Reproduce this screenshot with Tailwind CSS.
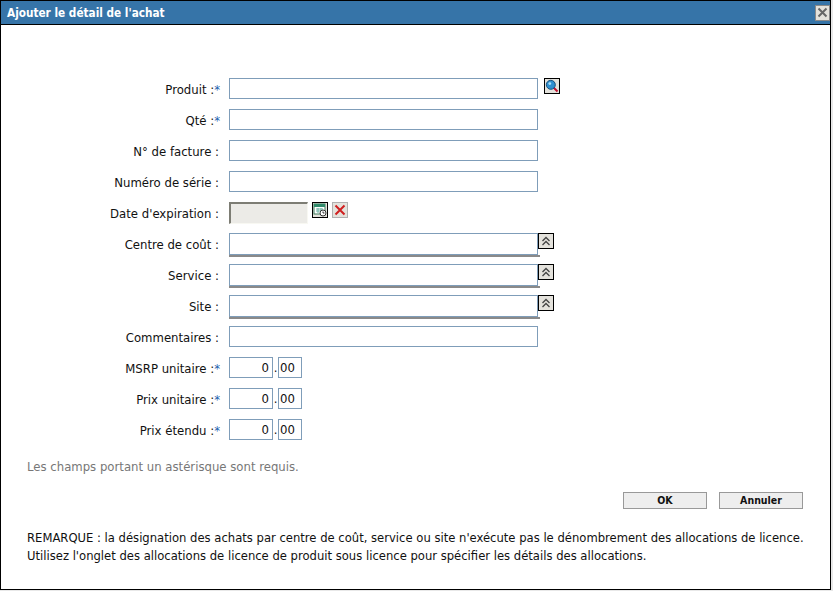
<!DOCTYPE html>
<html lang="fr">
<head>
    <meta charset="UTF-8">
    <title>Ajouter le détail de l'achat</title>
    <script src="https://cdn.jsdelivr.net/npm/@tailwindcss/browser@4"></script>
</head>
<body class="bg-[#e8e8e8] w-[833px] h-[591px] overflow-hidden font-['DejaVu_Sans_Condensed','DejaVu_Sans',sans-serif] text-[13px] text-[#111]">
    <div class="w-[831px] h-[590px] bg-white border border-black flex flex-col">
        <div class="h-[23px] bg-[#3674a8] flex items-center justify-between pl-[6px] shrink-0">
            <h1 class="text-[11.7px] font-bold text-white pt-[2px]">Ajouter le détail de l'achat</h1>
            <button class="w-[15px] h-[16px] bg-[#e4e2dc] border border-[#8a8a8a] flex items-center justify-center">
                <svg width="11" height="11" viewBox="0 0 11 11"><path d="M1.5 1.5l8 8M9.5 1.5l-8 8" stroke="#666" stroke-width="2"/></svg>
            </button>
        </div>
        <div class="h-[1px] bg-black shrink-0"></div>

        <form class="mt-[53px] flex flex-col gap-[10px]">
            <div class="flex items-center h-[21px]">
                <label class="w-[220px] text-right pr-[1px] pt-[3px]">Produit :<span class="text-[#1f5fb0]">*</span></label>
                <input class="ml-[8px] w-[309px] h-[21px] border border-[#7f9db9]">
                <button type="button" class="ml-[6px] mb-[5px] w-[16px] h-[16px] border border-black bg-[#e4e2dc] flex items-center justify-center">
                    <svg width="14" height="14" viewBox="0 0 14 14"><path d="M8.5 8.5L12.5 12.5" stroke="#c01030" stroke-width="2"/><circle cx="5.8" cy="5.8" r="4.5" fill="#2f8fd0" stroke="#17507c"/><circle cx="4.8" cy="4.6" r="1.4" fill="#a8e0f8"/></svg>
                </button>
            </div>
            <div class="flex items-center h-[21px]">
                <label class="w-[220px] text-right pr-[1px] pt-[3px]">Qté :<span class="text-[#1f5fb0]">*</span></label>
                <input class="ml-[8px] w-[309px] h-[21px] border border-[#7f9db9]">
            </div>
            <div class="flex items-center h-[21px]">
                <label class="w-[220px] text-right pr-[2px] pt-[3px]">N° de facture :</label>
                <input class="ml-[8px] w-[309px] h-[21px] border border-[#7f9db9]">
            </div>
            <div class="flex items-center h-[21px]">
                <label class="w-[220px] text-right pr-[2px] pt-[3px]">Numéro de série :</label>
                <input class="ml-[8px] w-[309px] h-[21px] border border-[#7f9db9]">
            </div>
            <div class="flex items-center h-[21px]">
                <label class="w-[220px] text-right pr-[2px] pt-[3px]">Date d'expiration :</label>
                <div class="ml-[8px] self-start w-[79px] h-[22px] bg-[#ecebe7] border-t-2 border-l-2 border-[#7d7d74] border-b border-r border-b-[#f8f8f2] border-r-[#f8f8f2]"></div>
                <button type="button" class="ml-[4px] mb-[5px] w-[16px] h-[16px] border border-black bg-[#e4e2dc] flex items-center justify-center">
                    <svg width="14" height="14" viewBox="0 0 14 14"><rect x="1" y="1" width="11" height="10" fill="#fff" stroke="#3c7a5a"/><rect x="1" y="1" width="11" height="3" fill="#2e8a6a"/><path d="M3 6h7M3 8h7M5 5v5M8 5v5" stroke="#6ab0a0"/><circle cx="10" cy="10" r="3" fill="#fff" stroke="#333"/><path d="M10 8.5V10h1.5" stroke="#333" fill="none"/></svg>
                </button>
                <button type="button" class="ml-[4px] mb-[5px] w-[16px] h-[16px] border border-[#b0b0b0] bg-[#e4e2dc] flex items-center justify-center">
                    <svg width="14" height="14" viewBox="0 0 14 14"><path d="M2.5 2.5l9 9M11.5 2.5l-9 9" stroke="#d02020" stroke-width="2"/></svg>
                </button>
            </div>
            <div class="flex items-start h-[21px]">
                <label class="w-[220px] text-right pr-[2px] pt-[3px] self-center">Centre de coût :</label>
                <div class="ml-[8px] w-[311px] h-[24px] border-b-2 border-[#8a8a8a]">
                    <input class="block w-[309px] h-[22px] border border-[#7f9db9]">
                </div>
                <button type="button" class="ml-[-2px] w-[16px] h-[16px] border border-black bg-[#e4e2dc] flex items-center justify-center">
                    <svg width="12" height="12" viewBox="0 0 12 12"><path d="M2.5 6l3.5-3.5 3.5 3.5M2.5 10l3.5-3.5 3.5 3.5" fill="none" stroke="#444" stroke-width="1.3"/></svg>
                </button>
            </div>
            <div class="flex items-start h-[21px]">
                <label class="w-[220px] text-right pr-[2px] pt-[3px] self-center">Service :</label>
                <div class="ml-[8px] w-[311px] h-[24px] border-b-2 border-[#8a8a8a]">
                    <input class="block w-[309px] h-[22px] border border-[#7f9db9]">
                </div>
                <button type="button" class="ml-[-2px] w-[16px] h-[16px] border border-black bg-[#e4e2dc] flex items-center justify-center">
                    <svg width="12" height="12" viewBox="0 0 12 12"><path d="M2.5 6l3.5-3.5 3.5 3.5M2.5 10l3.5-3.5 3.5 3.5" fill="none" stroke="#444" stroke-width="1.3"/></svg>
                </button>
            </div>
            <div class="flex items-start h-[21px]">
                <label class="w-[220px] text-right pr-[2px] pt-[3px] self-center">Site :</label>
                <div class="ml-[8px] w-[311px] h-[24px] border-b-2 border-[#8a8a8a]">
                    <input class="block w-[309px] h-[22px] border border-[#7f9db9]">
                </div>
                <button type="button" class="ml-[-2px] w-[16px] h-[16px] border border-black bg-[#e4e2dc] flex items-center justify-center">
                    <svg width="12" height="12" viewBox="0 0 12 12"><path d="M2.5 6l3.5-3.5 3.5 3.5M2.5 10l3.5-3.5 3.5 3.5" fill="none" stroke="#444" stroke-width="1.3"/></svg>
                </button>
            </div>
            <div class="flex items-center h-[21px]">
                <label class="w-[220px] text-right pr-[2px] pt-[3px]">Commentaires :</label>
                <input class="ml-[8px] w-[309px] h-[21px] border border-[#7f9db9]">
            </div>
            <div class="flex items-center h-[21px]">
                <label class="w-[220px] text-right pr-[1px] pt-[3px]">MSRP unitaire :<span class="text-[#1f5fb0]">*</span></label>
                <input value="0" class="ml-[8px] w-[44px] h-[21px] border border-[#7f9db9] text-right pr-[3px]">
                <span class="w-[5px] text-center">.</span>
                <input value="00" class="w-[24px] h-[21px] border border-[#7f9db9] pl-[1px]">
            </div>
            <div class="flex items-center h-[21px]">
                <label class="w-[220px] text-right pr-[1px] pt-[3px]">Prix unitaire :<span class="text-[#1f5fb0]">*</span></label>
                <input value="0" class="ml-[8px] w-[44px] h-[21px] border border-[#7f9db9] text-right pr-[3px]">
                <span class="w-[5px] text-center">.</span>
                <input value="00" class="w-[24px] h-[21px] border border-[#7f9db9] pl-[1px]">
            </div>
            <div class="flex items-center h-[21px]">
                <label class="w-[220px] text-right pr-[1px] pt-[3px]">Prix étendu :<span class="text-[#1f5fb0]">*</span></label>
                <input value="0" class="ml-[8px] w-[44px] h-[21px] border border-[#7f9db9] text-right pr-[3px]">
                <span class="w-[5px] text-center">.</span>
                <input value="00" class="w-[24px] h-[21px] border border-[#7f9db9] pl-[1px]">
            </div>
        </form>

        <p class="mt-[17px] ml-[26px] text-[#777]">Les champs portant un astérisque sont requis.</p>

        <div class="mt-[15px] flex justify-end gap-[12px] pr-[27px]">
            <button class="w-[84px] h-[17px] bg-[#eeeeee] border border-[#999] font-bold text-[10.5px] leading-none">OK</button>
            <button class="w-[84px] h-[17px] bg-[#eeeeee] border border-[#999] font-bold text-[10.5px] leading-none">Annuler</button>
        </div>

        <p class="mt-[20px] ml-[26px] w-[785px] text-[12.9px] leading-[18px]">REMARQUE : la désignation des achats par centre de coût, service ou site n'exécute pas le dénombrement des allocations de licence. Utilisez l'onglet des allocations de licence de produit sous licence pour spécifier les détails des allocations.</p>
    </div>
</body>
</html>
